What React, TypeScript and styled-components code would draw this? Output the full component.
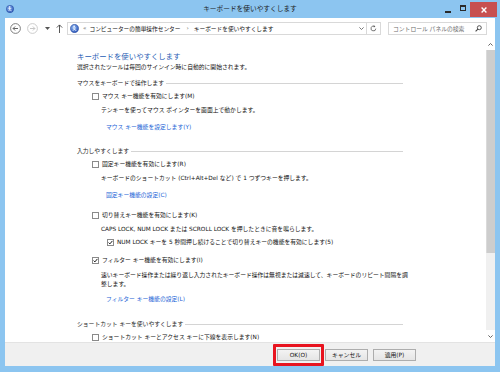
import React from 'react';
import styled, { createGlobalStyle } from 'styled-components';

const GlobalStyle = createGlobalStyle`
  html, body {
    margin: 0;
    padding: 0;
    background: #8cc5f0;
  }
  body {
    font-family: 'DejaVu Sans', 'Noto Sans CJK JP', sans-serif;
    color: #111;
  }
`;

const FRAME = '#8cc5f0';

const Window = styled.div`
  width: 500px;
  height: 372px;
  background: ${FRAME};
  display: flex;
  flex-direction: column;
  overflow: hidden;
`;

const TitleBar = styled.div`
  height: 18px;
  flex: none;
  display: grid;
  grid-template-columns: 1fr auto 1fr;
  align-items: center;
`;

const TitleLeft = styled.div`
  display: flex;
  align-items: center;
  padding-left: 6px;
`;

const TitleText = styled.div`
  font-size: 6.7px;
  line-height: 18px;
  color: #1b1b1b;
  white-space: nowrap;
`;

const TitleControls = styled.div`
  display: flex;
  justify-content: flex-end;
  align-self: start;
  padding-right: 3px;
`;

const CaptionButton = styled.div<{ $w: number }>`
  width: ${({ $w }) => $w}px;
  height: 15px;
  display: flex;
  align-items: center;
  justify-content: center;
`;

const CloseButton = styled(CaptionButton)`
  margin-top: 2px;
  background: #c75050;
  color: #fff;
`;

const MinGlyph = styled.div`
  width: 6px;
  height: 2px;
  background: #2a2a2a;
  margin-top: 8px;
`;

const MaxGlyph = styled.div`
  width: 4px;
  height: 3px;
  border: 1px solid #2a2a2a;
  border-top-width: 2px;
  margin-top: 1px;
`;

const Client = styled.div`
  flex: 1;
  margin: 0 5px 6px 5px;
  background: #fff;
  display: flex;
  flex-direction: column;
  min-height: 0;
`;

const Toolbar = styled.div`
  height: 20px;
  flex: none;
  display: flex;
  align-items: center;
  padding-left: 5px;
`;

const NavIcon = styled.div<{ $ml?: number }>`
  display: flex;
  align-items: center;
  margin-left: ${({ $ml }) => $ml ?? 0}px;
`;

const AddressBox = styled.div`
  margin-left: 4px;
  width: 300px;
  height: 13px;
  box-sizing: border-box;
  border: 1px solid #d9d9d9;
  display: flex;
  align-items: center;
  padding-left: 2px;
  font-size: 5.7px;
  white-space: nowrap;
`;

const Crumb = styled.span<{ $ml: number; $muted?: boolean }>`
  margin-left: ${({ $ml }) => $ml}px;
  color: ${({ $muted }) => ($muted ? '#777' : '#111')};
`;

const AddressEnd = styled.div`
  margin-left: auto;
  width: 9px;
  display: flex;
  justify-content: center;
`;

const RefreshBox = styled.div`
  width: 14px;
  height: 13px;
  box-sizing: border-box;
  border: 1px solid #d9d9d9;
  border-left: none;
  display: flex;
  align-items: center;
  justify-content: center;
`;

const SearchBox = styled.div`
  margin-left: 7px;
  width: 99px;
  height: 13px;
  box-sizing: border-box;
  border: 1px solid #d9d9d9;
  display: flex;
  align-items: center;
  padding: 0 4px 0 4px;
  font-size: 5.8px;
  color: #6d6d6d;
  white-space: nowrap;
`;

const SearchIcon = styled.div`
  margin-left: auto;
  display: flex;
`;

const Main = styled.div`
  flex: 1;
  display: flex;
  min-height: 0;
`;

const Content = styled.div`
  flex: 1;
  overflow: hidden;
  padding: 12.5px 0 0 72px;
`;

const Heading = styled.div`
  font-size: 7.4px;
  line-height: 11px;
  color: #1f5cb4;
  white-space: nowrap;
`;

const Line = styled.div<{ $mt?: number; $indent?: number }>`
  font-size: 5.8px;
  line-height: 9px;
  white-space: nowrap;
  margin-top: ${({ $mt }) => $mt ?? 0}px;
  margin-left: ${({ $indent }) => $indent ?? 0}px;
`;

const SectionHeader = styled(Line)`
  width: 326px;
  display: flex;
  align-items: center;
  color: #1e1e1e;
`;

const SectionRule = styled.div`
  flex: 1;
  height: 1px;
  background: #d4d4d4;
  margin-left: 2px;
  margin-top: 1px;
`;

const CheckRow = styled(Line)`
  display: flex;
  align-items: center;
`;

const Box = styled.div`
  width: 7px;
  height: 7px;
  box-sizing: border-box;
  border: 1px solid #8a8a8a;
  background: #fff;
  margin-right: 3px;
  display: flex;
  align-items: center;
  justify-content: center;
`;

const Link = styled(Line)`
  color: #1a63d6;
`;

const ScrollBar = styled.div`
  width: 9px;
  flex: none;
  display: flex;
  flex-direction: column;
  background: #f0f0f0;
`;

const ScrollArrow = styled.div`
  height: 12px;
  flex: none;
  background: #fff;
  display: flex;
  align-items: center;
  justify-content: center;
`;

const Thumb = styled.div`
  height: 203px;
  flex: none;
  background: #cdcdcd;
  border-left: 1px solid #dadada;
`;

const Track = styled.div`
  flex: 1;
`;

const ButtonBar = styled.div`
  height: 24px;
  flex: none;
  box-sizing: border-box;
  background: #f0f0f0;
  border-top: 1px solid #e3e3e3;
  display: flex;
  justify-content: flex-end;
  align-items: flex-start;
  gap: 5px;
  padding: 6px 79px 0 0;
`;

const Button = styled.div`
  width: 43px;
  height: 12px;
  box-sizing: border-box;
  border: 1px solid #adadad;
  background: linear-gradient(#f3f3f3, #e5e5e5);
  font-size: 5.8px;
  line-height: 10px;
  text-align: center;
  color: #111;
  white-space: nowrap;
`;

const Highlight = styled.div`
  position: relative;
  &::after {
    content: '';
    position: absolute;
    left: -4px;
    right: -4px;
    top: -5px;
    bottom: -5px;
    border: 3px solid #e8141f;
    border-radius: 1px;
  }
`;

const Check = () => (
  <svg width="5" height="5" viewBox="0 0 5 5">
    <path d="M0.6 2.6 L1.9 3.9 L4.4 0.9" fill="none" stroke="#1a1a1a" strokeWidth="1" />
  </svg>
);

const CpIcon = ({ size }: { size: number }) => (
  <svg width={size} height={size} viewBox="0 0 10 10">
    <defs>
      <radialGradient id={`cp${size}`} cx="0.4" cy="0.35" r="0.7">
        <stop offset="0" stopColor="#8fb8f2" />
        <stop offset="1" stopColor="#2853b8" />
      </radialGradient>
    </defs>
    <circle cx="5" cy="5" r="4.6" fill={`url(#cp${size})`} stroke="#1d3f91" strokeWidth="0.5" />
    <circle cx="4.6" cy="2.6" r="0.9" fill="#fff" />
    <path d="M3 4.4 L6.6 4.4 M4.6 4.2 L4.4 6 L3.2 7.6 M4.4 6 L6 6.4 L6.8 7.8" fill="none" stroke="#fff" strokeWidth="0.8" />
  </svg>
);

const Option = ({ label, checked, mt, indent = 15 }: { label: string; checked?: boolean; mt: number; indent?: number }) => (
  <CheckRow $mt={mt} $indent={indent}>
    <Box>{checked && <Check />}</Box>
    {label}
  </CheckRow>
);

export default function App() {
  return (
    <>
      <GlobalStyle />
      <Window>
        <TitleBar>
          <TitleLeft>
            <CpIcon size={8} />
          </TitleLeft>
          <TitleText>キーボードを使いやすくします</TitleText>
          <TitleControls>
            <CaptionButton $w={15}>
              <MinGlyph />
            </CaptionButton>
            <CaptionButton $w={15}>
              <MaxGlyph />
            </CaptionButton>
            <CloseButton $w={27}>
              <svg width="6" height="6" viewBox="0 0 6 6">
                <path d="M0.6 0.6 L5.4 5.4 M5.4 0.6 L0.6 5.4" stroke="#fff" strokeWidth="1.4" />
              </svg>
            </CloseButton>
          </TitleControls>
        </TitleBar>

        <Client>
          <Toolbar>
            <NavIcon>
              <svg width="11" height="11" viewBox="0 0 11 11">
                <circle cx="5.5" cy="5.5" r="4.9" fill="none" stroke="#707070" strokeWidth="0.9" />
                <path d="M8 5.5 H3.2 M5.1 3.5 L3.1 5.5 L5.1 7.5" fill="none" stroke="#555" strokeWidth="0.9" />
              </svg>
            </NavIcon>
            <NavIcon $ml={6}>
              <svg width="11" height="11" viewBox="0 0 11 11">
                <circle cx="5.5" cy="5.5" r="4.9" fill="none" stroke="#c6c6c6" strokeWidth="0.9" />
                <path d="M3 5.5 H7.8 M5.9 3.5 L7.9 5.5 L5.9 7.5" fill="none" stroke="#c0c0c0" strokeWidth="0.9" />
              </svg>
            </NavIcon>
            <NavIcon $ml={7}>
              <svg width="5" height="3" viewBox="0 0 5 3">
                <path d="M0 0 H5 L2.5 3 Z" fill="#555" />
              </svg>
            </NavIcon>
            <NavIcon $ml={6}>
              <svg width="7" height="9" viewBox="0 0 7 9">
                <path d="M3.5 9 V1 M0.8 3.6 L3.5 0.9 L6.2 3.6" fill="none" stroke="#444" strokeWidth="0.9" />
              </svg>
            </NavIcon>
            <AddressBox>
              <CpIcon size={9} />
              <Crumb $ml={4} $muted>«</Crumb>
              <Crumb $ml={3}>コンピューターの簡単操作センター</Crumb>
              <Crumb $ml={6} $muted>›</Crumb>
              <Crumb $ml={5}>キーボードを使いやすくします</Crumb>
              <AddressEnd>
                <svg width="5" height="3" viewBox="0 0 5 3">
                  <path d="M0.4 0.4 L2.5 2.5 L4.6 0.4" fill="none" stroke="#555" strokeWidth="0.8" />
                </svg>
              </AddressEnd>
            </AddressBox>
            <RefreshBox>
              <svg width="7" height="7" viewBox="0 0 7 7">
                <path d="M5.8 3.6 A2.4 2.4 0 1 1 4.6 1.4" fill="none" stroke="#555" strokeWidth="0.8" />
                <path d="M3.6 0.2 L5.4 1.2 L3.9 2.6 Z" fill="#555" />
              </svg>
            </RefreshBox>
            <SearchBox>
              コントロール パネルの検索
              <SearchIcon>
                <svg width="7" height="7" viewBox="0 0 7 7">
                  <circle cx="4.3" cy="2.7" r="2" fill="none" stroke="#444" strokeWidth="0.9" />
                  <path d="M2.9 4.1 L0.6 6.4" stroke="#444" strokeWidth="1.1" />
                </svg>
              </SearchIcon>
            </SearchBox>
          </Toolbar>

          <Main>
            <Content>
              <Heading>キーボードを使いやすくします</Heading>
              <Line $mt={1}>選択されたツールは毎回のサインイン時に自動的に開始されます。</Line>

              <SectionHeader $mt={7}>
                マウスをキーボードで操作します
                <SectionRule />
              </SectionHeader>
              <Option mt={4} label="マウス キー機能を有効にします(M)" />
              <Line $mt={5} $indent={24}>テンキーを使ってマウス ポインターを画面上で動かします。</Line>
              <Link $mt={8} $indent={29}>マウス キー機能を設定します(Y)</Link>

              <SectionHeader $mt={15}>
                入力しやすくします
                <SectionRule />
              </SectionHeader>
              <Option mt={4} label="固定キー機能を有効にします(R)" />
              <Line $mt={5} $indent={24}>キーボードのショートカット (Ctrl+Alt+Del など) で 1 つずつキーを押します。</Line>
              <Link $mt={8} $indent={29}>固定キー機能の設定(C)</Link>

              <Option mt={11} label="切り替えキー機能を有効にします(K)" />
              <Line $mt={5} $indent={24}>CAPS LOCK, NUM LOCK または SCROLL LOCK を押したときに音を鳴らします。</Line>
              <Option mt={4} indent={30} checked label="NUM LOCK キーを 5 秒間押し続けることで切り替えキーの機能を有効にします(5)" />

              <Option mt={9} checked label="フィルター キー機能を有効にします(I)" />
              <Line $mt={6} $indent={24}>
                速いキーボード操作または繰り返し入力されたキーボード操作は無視または減速して、キーボードのリピート間隔を調
                <br />
                整します。
              </Line>
              <Link $mt={6} $indent={29}>フィルター キー機能の設定(L)</Link>

              <SectionHeader $mt={16}>
                ショートカット キーを使いやすくします
                <SectionRule />
              </SectionHeader>
              <Option mt={4} label="ショートカット キーとアクセス キーに下線を表示します(N)" />
            </Content>

            <ScrollBar>
              <ScrollArrow>
                <svg width="5" height="3" viewBox="0 0 5 3">
                  <path d="M0.4 2.6 L2.5 0.5 L4.6 2.6" fill="none" stroke="#555" strokeWidth="0.9" />
                </svg>
              </ScrollArrow>
              <Thumb />
              <Track />
              <ScrollArrow>
                <svg width="5" height="3" viewBox="0 0 5 3">
                  <path d="M0.4 0.4 L2.5 2.5 L4.6 0.4" fill="none" stroke="#555" strokeWidth="0.9" />
                </svg>
              </ScrollArrow>
            </ScrollBar>
          </Main>

          <ButtonBar>
            <Highlight>
              <Button>OK(O)</Button>
            </Highlight>
            <Button>キャンセル</Button>
            <Button>適用(P)</Button>
          </ButtonBar>
        </Client>
      </Window>
    </>
  );
}
